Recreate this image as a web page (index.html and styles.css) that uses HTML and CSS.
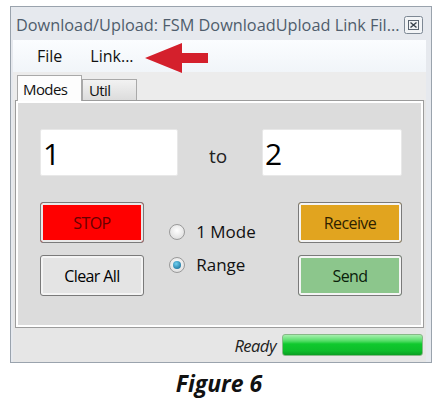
FILE: index.html
```html
<!DOCTYPE html>
<html>
<head>
<meta charset="utf-8">
<link rel="stylesheet" href="styles.css">
</head>
<body>
<div class="window">
  <div class="titlebar">
    <span class="title">Download/Upload: FSM DownloadUpload Link Fil...</span>
    <svg class="close" width="19" height="18" viewBox="0 0 19 18">
      <rect x="0.5" y="0.5" width="18" height="17" rx="2" fill="#f2f4f6" stroke="#7d8894"/>
      <rect x="4.5" y="4.5" width="10" height="9" fill="none" stroke="#5a6470"/>
      <path d="M6.5 6.5 L12.5 11.5 M12.5 6.5 L6.5 11.5" stroke="#3a434c" stroke-width="1.4"/>
    </svg>
  </div>
  <div class="client">
    <div class="menubar">
      <span class="menuitem">File</span>
      <span class="menuitem">Link...</span>
      <svg class="arrow" width="64" height="30" viewBox="0 0 64 30">
        <polygon points="0,15 37,0 37,10 63,10 63,20 37,20 37,30" fill="#d4202c"/>
      </svg>
    </div>
    <div class="tabstrip">
      <div class="tab active">Modes</div>
      <div class="tab">Util</div>
    </div>
    <div class="panel">
      <div class="panel-inner">
        <div class="range-row">
          <div class="field">1</div>
          <div class="to">to</div>
          <div class="field">2</div>
        </div>
        <div class="controls">
          <div class="btncol">
            <div class="btn stop">STOP</div>
            <div class="btn">Clear All</div>
          </div>
          <div class="radios">
            <div class="radio"><span class="dot"></span>1 Mode</div>
            <div class="radio"><span class="dot on"></span>Range</div>
          </div>
          <div class="btncol">
            <div class="btn receive">Receive</div>
            <div class="btn send">Send</div>
          </div>
        </div>
      </div>
    </div>
    <div class="statusbar">
      <span class="ready">Ready</span>
      <div class="progress"></div>
    </div>
  </div>
</div>
<div class="caption">Figure 6</div>
</body>
</html>
```
FILE: styles.css
```css
* { box-sizing: border-box; }
body {
  margin: 0;
  background: #ffffff;
  font-family: "Open Sans", "Noto Sans", sans-serif;
}
.window {
  margin: 6px 0 0 10px;
  width: 422px;
  height: 357px;
  border: 1px solid #9aa3ad;
  background: #e6e9ee;
  display: flex;
  flex-direction: column;
}
.titlebar {
  height: 33px;
  display: flex;
  align-items: center;
  justify-content: space-between;
  padding: 2px 8px 0 5px;
}
.title {
  font-size: 16.3px;
  color: #4f5d6c;
  white-space: nowrap;
}
.close { display: block; }
.client {
  flex: 1;
  margin: 0 5px 0 2px;
  display: flex;
  flex-direction: column;
  background: #e6e6e6;
}
.menubar {
  position: relative;
  height: 32px;
  background: linear-gradient(#fbfdff, #f1f5f9);
  display: flex;
  align-items: center;
  padding-left: 24px;
  gap: 28px;
}
.menuitem {
  font-size: 16px;
  color: #111;
}
.arrow {
  position: absolute;
  left: 132px;
  top: 3px;
}
.tabstrip {
  height: 28px;
  display: flex;
  align-items: flex-end;
  padding-left: 4px;
  background: #ececec;
}
.tab {
  font-size: 15px;
  color: #111;
  letter-spacing: -0.6px;
  border: 1px solid #a9a9a9;
  border-bottom: none;
  background: linear-gradient(#f2f2f2, #dcdcdc);
  height: 21px;
  padding: 0 6px;
  display: flex;
  align-items: center;
  width: 55px;
}
.tab.active {
  height: 26px;
  width: 65px;
  background: #fdfdfd;
  padding-left: 5px;
  margin-bottom: -1px;
  position: relative;
  z-index: 1;
}
.panel {
  margin: 0 2px 0 2px;
  height: 228px;
  border: 1px solid #9c9c9c;
  background: #ffffff;
  padding: 2px;
}
.panel-inner {
  height: 100%;
  background: #dcdcdc;
  padding: 26px 19px 0 22px;
}
.range-row {
  display: grid;
  grid-template-columns: 138px 1fr 140px;
  align-items: center;
  height: 47px;
}
.field {
  height: 47px;
  background: #ffffff;
  border: 1px solid #e8e8e8;
  border-radius: 2px;
  font-size: 30px;
  color: #000;
  padding-left: 2px;
  display: flex;
  align-items: center;
  padding-top: 2px;
}
.to {
  text-align: center;
  font-size: 19px;
  color: #222;
  padding-top: 6px;
  padding-right: 4px;
}
.controls {
  margin-top: 26px;
  display: flex;
  justify-content: space-between;
  align-items: flex-start;
}
.btncol {
  display: flex;
  flex-direction: column;
  gap: 12px;
  width: 104px;
}
.btn {
  height: 41px;
  border: 1px solid #7a7a7a;
  border-radius: 3px;
  box-shadow: inset 0 0 0 2px #f4f4f4;
  background: #e4e4e4;
  display: flex;
  align-items: center;
  justify-content: center;
  font-size: 16px;
  letter-spacing: -0.6px;
  color: #000;
}
.btn.stop {
  background: #ff0000;
  color: #660000;
  box-shadow: inset 0 0 0 2px #e9e9e9;
}
.btn.receive {
  background: #e1a41f;
  color: #2e1f00;
}
.btn.send {
  background: #8cc68c;
  color: #0a200a;
}
.radios {
  display: flex;
  flex-direction: column;
  gap: 12px;
  padding-top: 19px;
  margin-right: 17px;
}
.radio {
  display: flex;
  align-items: center;
  font-size: 17px;
  color: #111;
  height: 21px;
}
.dot {
  width: 16px;
  height: 16px;
  border-radius: 50%;
  border: 1px solid #9a9a9a;
  background: radial-gradient(circle at 50% 40%, #ffffff, #d6d6d6);
  margin-right: 11px;
  display: flex;
  align-items: center;
  justify-content: center;
}
.dot.on::after {
  content: "";
  width: 8px;
  height: 8px;
  border-radius: 50%;
  background: radial-gradient(circle at 40% 35%, #6fd0f0, #0b5f8c);
}
.statusbar {
  flex: 1;
  display: flex;
  align-items: center;
  justify-content: flex-end;
  padding-right: 3px;
  gap: 6px;
}
.ready {
  font-style: italic;
  font-size: 16.5px;
  letter-spacing: -0.5px;
  color: #222;
}
.progress {
  width: 141px;
  height: 22px;
  border: 1px solid #88b888;
  border-radius: 3px;
  background: linear-gradient(#a6f0ae 0%, #52dd66 30%, #10c92e 45%, #0dbd2a 80%, #0a9e23 100%);
}
.caption {
  text-align: center;
  font-weight: bold;
  font-style: italic;
  font-size: 23px;
  color: #111;
  margin-top: 4px;
  padding-right: 2px;
}
```
